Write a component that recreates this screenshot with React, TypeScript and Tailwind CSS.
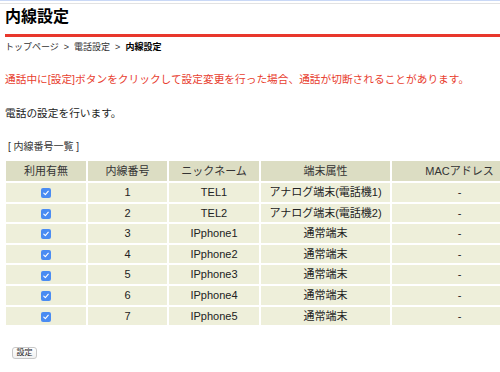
import React from 'react';

interface LineRow {
    no: number;
    nick: string;
    kind: string;
}

const rows: LineRow[] = [
    { no: 1, nick: 'TEL1', kind: 'アナログ端末(電話機1)' },
    { no: 2, nick: 'TEL2', kind: 'アナログ端末(電話機2)' },
    { no: 3, nick: 'IPphone1', kind: '通常端末' },
    { no: 4, nick: 'IPphone2', kind: '通常端末' },
    { no: 5, nick: 'IPphone3', kind: '通常端末' },
    { no: 6, nick: 'IPphone4', kind: '通常端末' },
    { no: 7, nick: 'IPphone5', kind: '通常端末' },
];

const CheckMark: React.FC = () => (
    <span className="inline-flex items-center justify-center w-[10px] h-[10px] rounded-[2px] bg-[#4a8cf2] align-middle">
        <svg viewBox="0 0 10 10" className="w-[8px] h-[8px]">
            <path d="M2.2 5.2 L4.2 7.1 L7.9 2.8" fill="none" stroke="#fff" strokeWidth="1.4" strokeLinecap="round" strokeLinejoin="round" />
        </svg>
    </span>
);

const Sep: React.FC = () => <span className="mx-[5px]">&gt;</span>;

const App: React.FC = () => {
    const headCell = 'bg-[#dcddc3] text-[#333] font-normal text-[11px] h-[20px] p-0 text-center';
    const bodyCell = 'bg-[#eeefda] text-[#222] text-[11px] h-[18.6px] p-0 text-center';

    return (
        <div className="w-[500px] h-[372px] overflow-hidden bg-white font-['Liberation_Sans','Noto_Sans_CJK_JP',sans-serif] text-[#222]">
            {/* top frame lines */}
            <div className="h-[1px] bg-[#c9d8f6]" />
            <div className="h-[2px]" />
            <div className="h-[1px] bg-[#e2e2e2]" />

            <div className="pl-[5px]">
                <h1 className="h-[26px] leading-[26px] text-[16px] font-bold text-black">内線設定</h1>
                <div className="mt-[4px] h-[3px] bg-[#e8372c]" />

                <div className="h-[20px] leading-[20px] text-[9px] text-[#333]">
                    トップページ<Sep />電話設定<Sep /><span className="font-bold text-black">内線設定</span>
                </div>

                <p className="mt-[14px] h-[16px] leading-[16px] text-[10.7px] text-[#e8402f] whitespace-nowrap">
                    通話中に[設定]ボタンをクリックして設定変更を行った場合、通話が切断されることがあります。
                </p>

                <p className="mt-[18px] h-[16px] leading-[16px] text-[10.7px] text-[#222]">電話の設定を行います。</p>

                <p className="mt-[18px] h-[16px] leading-[16px] text-[10px] text-[#333] pl-[3px]">[ 内線番号一覧 ]</p>

                <table className="mt-[4px] -ml-[1px] border-separate border-spacing-[2px] table-fixed w-[523px]">
                    <colgroup>
                        <col className="w-[80px]" />
                        <col className="w-[79px]" />
                        <col className="w-[90px]" />
                        <col className="w-[129px]" />
                        <col className="w-[135px]" />
                    </colgroup>
                    <thead>
                        <tr>
                            <th className={headCell}>利用有無</th>
                            <th className={headCell}>内線番号</th>
                            <th className={headCell}>ニックネーム</th>
                            <th className={headCell}>端末属性</th>
                            <th className={headCell}>MACアドレス</th>
                        </tr>
                    </thead>
                    <tbody>
                        {rows.map(r => (
                            <tr key={r.no}>
                                <td className={bodyCell}><CheckMark /></td>
                                <td className={bodyCell}>{r.no}</td>
                                <td className={bodyCell}>{r.nick}</td>
                                <td className={bodyCell}>{r.kind}</td>
                                <td className={bodyCell}>-</td>
                            </tr>
                        ))}
                    </tbody>
                </table>

                <button className="mt-[20px] ml-[7px] w-[25px] h-[12px] flex items-center justify-center rounded-[3px] border border-[#c8c8c8] bg-gradient-to-b from-white to-[#f1f1f1] text-[8px] leading-none text-[#222]">
                    設定
                </button>
            </div>
        </div>
    );
};

export default App;
